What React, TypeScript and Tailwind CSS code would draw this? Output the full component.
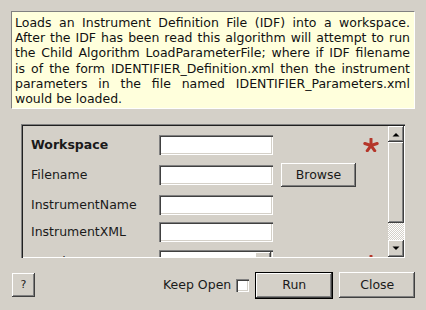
import React from "react";

const raised =
  "bg-[#d4d0c8] shadow-[inset_-1px_-1px_0_#404040,inset_1px_1px_0_#ffffff,inset_-2px_-2px_0_#808080]";
const sunken =
  "bg-white shadow-[inset_1px_1px_0_#808080,inset_2px_2px_0_#404040,inset_-1px_-1px_0_#ffffff,inset_-2px_-2px_0_#d4d0c8]";

function Asterisk() {
  const arms = [-90, -18, 54, 126, 198];
  return (
    <svg width="16" height="14" viewBox="0 0 16 14">
      {arms.map((a) => {
        const r = (a * Math.PI) / 180;
        return (
          <line
            key={a}
            x1={8}
            y1={7.5}
            x2={8 + Math.cos(r) * 6.5}
            y2={7.5 + Math.sin(r) * 6.5}
            stroke="#b5362a"
            strokeWidth={3}
            strokeLinecap="round"
          />
        );
      })}
    </svg>
  );
}

function Row({
  label,
  bold,
  mt,
  children,
  star,
}: {
  label: string;
  bold?: boolean;
  mt: string;
  children?: React.ReactNode;
  star?: boolean;
}) {
  return (
    <div className={`flex items-center h-[20px] shrink-0 ${mt}`}>
      <div className={`w-[136px] pl-[8px] ${bold ? "font-bold" : ""}`}>{label}</div>
      <div className={`w-[114px] h-[20px] ${sunken}`} />
      <div className="w-[90px] flex items-center">{children}</div>
      <div className="w-[16px] flex items-center justify-center">{star ? <Asterisk /> : null}</div>
    </div>
  );
}

export default function App() {
  const lines = [
    "Loads an Instrument Definition File (IDF) into a workspace.",
    "After the IDF has been read this algorithm will attempt to run",
    "the Child Algorithm LoadParameterFile; where if IDF filename",
    "is of the form IDENTIFIER_Definition.xml then the instrument",
    "parameters in the file named IDENTIFIER_Parameters.xml",
  ];
  return (
    <div className="w-[426px] h-[310px] bg-[#d4d0c8] font-['DejaVu_Sans',sans-serif] text-[12.5px] text-black overflow-hidden flex flex-col">
      {/* Description */}
      <div className="ml-[11px] mt-[11px] w-[404px] h-[98px] bg-[#ffffdc] border-t border-l border-[#808080] border-r border-b border-r-white border-b-white pl-[3px] pr-[4px] pt-[3px] leading-[15.2px] text-[#111]">
        {lines.map((l) => (
          <div key={l} className="text-justify [text-align-last:justify] whitespace-nowrap">
            {l}
          </div>
        ))}
        <div>would be loaded.</div>
      </div>

      {/* Property frame */}
      <div className="ml-[21px] mt-[15px] w-[384px] h-[134px] flex shadow-[inset_1px_1px_0_#808080,inset_2px_2px_0_#202020,inset_-1px_-1px_0_#ffffff] p-[2px] pr-[1px] pb-[1px]">
        <div className="flex-1 overflow-hidden flex flex-col text-[#1a1a1a]">
          <Row label="Workspace" bold mt="mt-[9px]" star />
          <Row label="Filename" mt="mt-[10px]">
            <div className={`ml-[8px] w-[75px] h-[24px] flex items-center justify-center ${raised}`}>Browse</div>
          </Row>
          <Row label="InstrumentName" mt="mt-[10px]" />
          <Row label="InstrumentXML" mt="mt-[7px]" />
          <div className="flex items-center h-[24px] shrink-0 mt-[8px]">
            <div className="w-[136px] pl-[8px]">RewriteSpectraMap</div>
            <div className={`self-start w-[114px] h-[22px] flex justify-end p-[2px] ${sunken}`}>
              <div className={`w-[16px] h-[18px] ${raised}`} />
            </div>
            <div className="w-[90px]" />
            <div className="w-[16px] flex items-center justify-center">
              <Asterisk />
            </div>
          </div>
        </div>
        {/* Scrollbar */}
        <div className="w-[16px] flex flex-col shrink-0">
          <div className={`h-[16px] flex items-center justify-center ${raised}`}>
            <svg width="8" height="5" viewBox="0 0 8 5">
              <polygon points="0.5,4.5 4,1 7.5,4.5" fill="#000" />
            </svg>
          </div>
          <div className={`h-[81px] ${raised}`} />
          <div className="flex-1 bg-[repeating-conic-gradient(#ffffff_0_25%,#d4d0c8_0_50%)] bg-[length:2px_2px]" />
          <div className={`h-[17px] flex items-center justify-center ${raised}`}>
            <svg width="8" height="5" viewBox="0 0 8 5">
              <polygon points="0.5,0.5 7.5,0.5 4,4" fill="#000" />
            </svg>
          </div>
        </div>
      </div>

      {/* Bottom bar */}
      <div className="mt-[14px] flex items-center h-[26px] text-[#1a1a1a]">
        <div className={`ml-[12px] w-[23px] h-[24px] flex items-center justify-center text-[11px] ${raised}`}>?</div>
        <div className="ml-[128px]">Keep Open</div>
        <div className={`ml-[5px] w-[13px] h-[13px] ${sunken}`} />
        <div className="ml-[6px] w-[78px] h-[27px] border border-black">
          <div className={`w-full h-full flex items-center justify-center ${raised}`}>Run</div>
        </div>
        <div className={`ml-[6px] w-[76px] h-[26px] flex items-center justify-center ${raised}`}>Close</div>
      </div>
    </div>
  );
}
